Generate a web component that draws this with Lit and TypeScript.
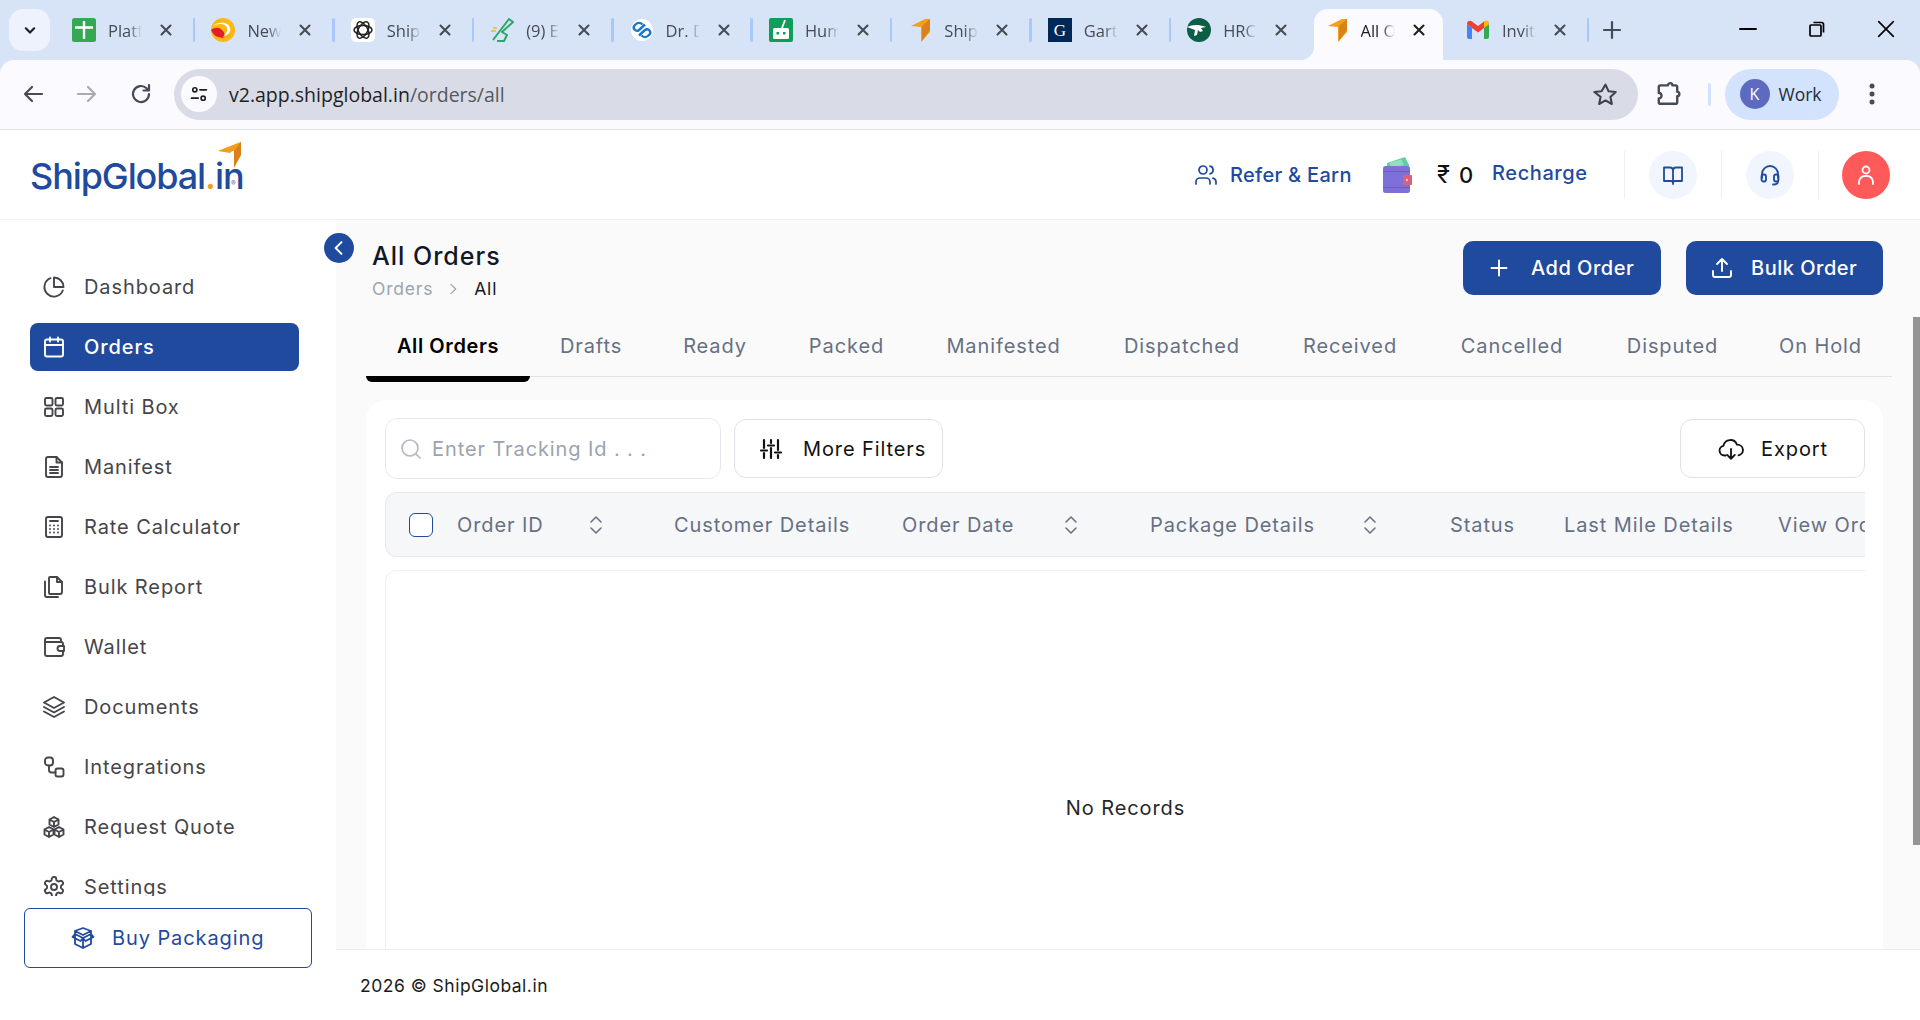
import { LitElement, html, css, svg } from "lit";
import { customElement } from "lit/decorators.js";

const line = (body: unknown, size = 24, sw = 2) => html`<svg width=${size} height=${size} viewBox="0 0 24 24" fill="none" stroke="currentColor" stroke-width=${sw} stroke-linecap="round" stroke-linejoin="round">${body}</svg>`;

const arrowMark = svg`<path d="M3 8 L17 1 L22 1 L22 14 L13 24 L13 9 Z" fill="#f59e1b"/><path d="M22 1 L22 12 L14 23 L14 8 Z" fill="#d9821a"/>`;

const favicons: Record<string, unknown> = {
  plus: html`<svg width="24" height="24" viewBox="0 0 24 24"><rect width="24" height="24" rx="2.5" fill="#34a853"/><path d="M12 3v18M3 9.5h18" stroke="#fff" stroke-width="2.4"/></svg>`,
  swirl: html`<svg width="24" height="24" viewBox="0 0 24 24"><circle cx="12" cy="12" r="12" fill="#fdb913"/><path d="M0 12c4-3 8-3 11 0s3 5 1 7c3 1 7 0 10-6a12 12 0 0 1-22-1z" fill="#e21f26"/><path d="M2 8c4-3 13-3 14 2 1 3-1 5-3 8 5-1 7-5 6-8C18 4 7 3 2 8z" fill="#fff"/></svg>`,
  knot: html`<svg width="24" height="24" viewBox="0 0 24 24"><rect width="24" height="24" rx="5" fill="#fff"/><g fill="none" stroke="#222" stroke-width="1.5"><ellipse cx="12" cy="12" rx="9" ry="4.6"/><ellipse cx="12" cy="12" rx="9" ry="4.6" transform="rotate(60 12 12)"/><ellipse cx="12" cy="12" rx="9" ry="4.6" transform="rotate(120 12 12)"/></g></svg>`,
  zig: html`<svg width="24" height="24" viewBox="0 0 24 24" fill="none"><path d="M3 22 L19 1 L23 4 L12 14 L17 17 L14 23 L7 23" stroke="#2ba866" stroke-width="2" stroke-linejoin="round"/><path d="M1 13h5M3 10h4" stroke="#f4b33a" stroke-width="1.5"/></svg>`,
  rings: html`<svg width="24" height="24" viewBox="0 0 24 24" fill="none"><circle cx="12" cy="12" r="11" fill="#fff"/><path d="M15 6.5 9 12a3.2 3.2 0 0 1-4.5-4.5l1-1a5 5 0 0 1 7 0M9 17.500 15 12a3.200 3.200 0 0 1 4.500 4.500l-1 1a5 5 0 0 1-7 0" stroke="#1877c9" stroke-width="2.400"/></svg>`,
  bot: html`<svg width="24" height="24" viewBox="0 0 24 24"><rect width="24" height="24" rx="2" fill="#0f9d58"/><rect x="4" y="10" width="16" height="11" rx="1.500" fill="#fff"/><path d="M13 10 16 2" stroke="#fff" stroke-width="1.800"/><rect x="7.500" y="14" width="2.500" height="2.500" fill="#0f9d58"/><rect x="14" y="14" width="2.500" height="2.500" fill="#0f9d58"/></svg>`,
  ship: html`<svg width="24" height="24" viewBox="0 0 24 24">${arrowMark}</svg>`,
  gart: html`<svg width="24" height="24" viewBox="0 0 24 24"><rect width="24" height="24" fill="#002856"/><text x="12" y="18" text-anchor="middle" font-family="'Liberation Serif',serif" font-size="17" fill="#fff">G</text></svg>`,
  hrc: html`<svg width="24" height="24" viewBox="0 0 24 24"><circle cx="12" cy="12" r="12" fill="#0c5f46"/><path d="M0 9c5-2 10-3 19 0l-5 1 2 3-3 1-2-2-1 5-3 1 1-6z" fill="#fff"/></svg>`,
  gmail: html`<svg width="24" height="24" viewBox="0 0 24 24" fill="none"><path d="M1 6v13a2 2 0 0 0 2 2h3V10z" fill="#4285f4"/><path d="M23 6v13a2 2 0 0 1-2 2h-3V10z" fill="#34a853"/><path d="M1 6c0-3 3-4 5-2.500L12 8l6-4.500c2-1.500 5-.5 5 2.500l-5 4-6 4.500L6 10z" fill="#ea4335"/><path d="M18 3.500c2-1.500 5-.5 5 2.500l-5 4z" fill="#fbbc04"/></svg>`,
};

const browserTabs = [
  ["plus", "Platform"], ["swirl", "New"], ["knot", "Ship"], ["zig", "(9) E"], ["rings", "Dr. D"],
  ["bot", "Hum"], ["ship", "Ship"], ["gart", "Gart"], ["hrc", "HRC"], ["ship", "All Orders"], ["gmail", "Invite"],
];

const navIcons: Record<string, unknown> = {
  pie: svg`<path d="M20.800 15.500A9.500 9.500 0 1 1 8.500 3.200"/><path d="M21.500 12A9.500 9.500 0 0 0 12 2.500V12z"/>`,
  cal: svg`<rect x="3" y="4.500" width="18" height="17" rx="2"/><path d="M8 2.500v4M16 2.500v4M3 10h18"/>`,
  grid: svg`<rect x="3" y="3" width="7.500" height="7.500" rx="1.500"/><rect x="13.500" y="3" width="7.500" height="7.500" rx="1.500"/><rect x="3" y="13.500" width="7.500" height="7.500" rx="1.500"/><rect x="13.500" y="13.500" width="7.500" height="7.500" rx="1.500"/>`,
  file: svg`<path d="M14.500 2H6a2 2 0 0 0-2 2v16a2 2 0 0 0 2 2h12a2 2 0 0 0 2-2V7.500z"/><path d="M14.500 2v5.500H20M8 12h8M8 15h8M8 18h8"/>`,
  calc: svg`<rect x="4" y="2" width="16" height="20" rx="2"/><path d="M8 6h8M8 10.500h.01M12 10.500h.01M16 10.500h.01M8 14h.01M12 14h.01M16 14h.01M8 17.500h.01M12 17.500h.01M16 17.500h.01"/>`,
  copy: svg`<path d="M8 2h7l5 5v10a2 2 0 0 1-2 2H8a1 1 0 0 1-1-1V3a1 1 0 0 1 1-1z"/><path d="M15 2v5h5M3 6.500V20a2 2 0 0 0 2 2h11"/>`,
  wallet: svg`<path d="M19 7V5a2 2 0 0 0-2-2H5a2 2 0 0 0-2 2v14a2 2 0 0 0 2 2h14a2 2 0 0 0 2-2v-3"/><path d="M3 7h16a2 2 0 0 1 2 2v2"/><path d="M22 11h-4a2.500 2.500 0 0 0 0 5h4z"/>`,
  layers: svg`<path d="M12 2 2 7.500 12 13l10-5.500z"/><path d="M2 12l10 5.500L22 12M2 16.500 12 22l10-5.500"/>`,
  nodes: svg`<rect x="3" y="2.500" width="8" height="8" rx="3"/><rect x="13.500" y="13.500" width="8" height="8" rx="2"/><path d="M7 10.500V15a2.500 2.500 0 0 0 2.500 2.500h4"/>`,
  cubes: svg`<path d="M12 2l4.500 2.500v5L12 12 7.500 9.500v-5zM12 7v5M7.500 4.500 12 7l4.500-2.500"/><path d="M7 12l4.500 2.500v5L7 22l-4.500-2.500v-5zM7 17v5M2.500 14.500 7 17l4.500-2.500"/><path d="M17 12l4.500 2.500v5L17 22l-4.500-2.500v-5zM17 17v5M12.500 14.500 17 17l4.500-2.500"/>`,
  gear: svg`<path d="M12.220 2h-.44a2 2 0 0 0-2 2v.18a2 2 0 0 1-1 1.730l-.43.25a2 2 0 0 1-2 0l-.15-.08a2 2 0 0 0-2.730.73l-.22.38a2 2 0 0 0 .73 2.730l.15.1a2 2 0 0 1 1 1.720v.51a2 2 0 0 1-1 1.740l-.15.09a2 2 0 0 0-.73 2.730l.22.38a2 2 0 0 0 2.730.73l.15-.08a2 2 0 0 1 2 0l.43.25a2 2 0 0 1 1 1.730V20a2 2 0 0 0 2 2h.44a2 2 0 0 0 2-2v-.18a2 2 0 0 1 1-1.730l.43-.25a2 2 0 0 1 2 0l.15.08a2 2 0 0 0 2.730-.73l.22-.39a2 2 0 0 0-.73-2.730l-.15-.08a2 2 0 0 1-1-1.740v-.5a2 2 0 0 1 1-1.740l.15-.09a2 2 0 0 0 .73-2.730l-.22-.38a2 2 0 0 0-2.730-.73l-.15.08a2 2 0 0 1-2 0l-.43-.25a2 2 0 0 1-1-1.730V4a2 2 0 0 0-2-2z"/><circle cx="12" cy="12" r="3"/>`,
};

const navItems = [
  ["pie", "Dashboard"], ["cal", "Orders"], ["grid", "Multi Box"], ["file", "Manifest"], ["calc", "Rate Calculator"],
  ["copy", "Bulk Report"], ["wallet", "Wallet"], ["layers", "Documents"], ["nodes", "Integrations"], ["cubes", "Request Quote"], ["gear", "Settings"],
];

// widths read off the reference, the text is centred in each
const orderTabs: [string, number][] = [
  ["All Orders", 164], ["Drafts", 122], ["Ready", 126], ["Packed", 137], ["Manifested", 177],
  ["Dispatched", 180], ["Received", 156], ["Cancelled", 168], ["Disputed", 153], ["On Hold", 143],
];

const columns: [string, number, number][] = [
  ["Order ID", 217, 70], ["Customer Details", 228, 0], ["Order Date", 248, 71], ["Package Details", 300, 72],
  ["Status", 114, 0], ["Last Mile Details", 214, 0], ["View Order", 120, 0],
];

const sortIcon = html`<svg class="sort" width="16" height="24" viewBox="0 0 16 24" fill="none" stroke="#6b7280" stroke-width="1.600" stroke-linecap="round" stroke-linejoin="round"><path d="M3 9l5-5 5 5M3 15l5 5 5-5"/></svg>`;

@customElement("app-root")
export class AppRoot extends LitElement {
  static styles = css`
    * { box-sizing: border-box; margin: 0; padding: 0; }
    :host { display: block; width: 1920px; height: 1020px; overflow: hidden; background: #fff; font-family: Inter, "Liberation Sans", sans-serif; font-size: 20px; letter-spacing: 0.9px; color: #111; }

    .chrome { background: #d7e3f7; font-family: "Open Sans", "Noto Sans", sans-serif; letter-spacing: 0; }
    .strip { height: 60px; display: flex; align-items: flex-end; }
    .tab-menu { width: 41px; height: 42px; margin: 0 6px 9px 9px; border-radius: 14px; background: #edf2fc; display: flex; align-items: center; justify-content: center; color: #1f1f1f; }
    .tab { width: 139.4px; height: 51px; padding: 0 0 9px 16px; display: flex; align-items: center; position: relative; color: #474b55; }
    .tab::after { content: ""; position: absolute; right: 0; top: 9px; width: 2.500px; height: 24px; background: #a8c7fa; border-radius: 2px; }
    .tab.before-active::after, .tab.active::after { display: none; }
    .tab .title { width: 34px; margin-left: 12px; font-size: 16.500px; white-space: nowrap; overflow: hidden; -webkit-mask-image: linear-gradient(90deg, #000 60%, transparent); mask-image: linear-gradient(90deg, #000 60%, transparent); }
    .tab .fav { width: 24px; height: 24px; flex: none; display: flex; }
    .tab .x { margin-left: 15px; display: flex; color: #474b55; }
    .tab.active { background: #fafaff; border-radius: 14px 14px 0 0; color: #1f1f1f; margin-left: 3px; width: 129px; padding-left: 11px; margin-right: 7.400px; }
    .tab.active .x { color: #1f1f1f; margin-left: 15px; }
    .tab.active::before { content: ""; position: absolute; left: -14px; bottom: 0; width: 14px; height: 14px; background: radial-gradient(circle at 0 0, transparent 14px, #fafaff 14.500px); }
    .new-tab { width: 46px; height: 42px; margin-bottom: 9px; display: flex; align-items: center; justify-content: center; color: #474b55; }
    .win { margin-left: auto; display: flex; align-self: flex-start; height: 60px; }
    .win span { width: 69px; height: 58px; display: flex; align-items: center; justify-content: center; color: #000; }

    .toolbar { height: 70px; background: #fafaff; border-radius: 14px 14px 0 0; border-bottom: 1px solid #e3e3e6; display: flex; align-items: center; padding: 0 0 1px 9px; color: #474b55; }
    .tool { width: 48px; height: 48px; margin-right: 6px; display: flex; align-items: center; justify-content: center; flex: none; }
    .tool.off { color: #a9abb0; }
    .omni { width: 1464px; height: 51px; margin-left: 3px; border-radius: 26px; background: #d9dce6; display: flex; align-items: center; padding: 0 20px 0 7px; }
    .site { width: 36px; height: 36px; border-radius: 50%; background: #fafaff; display: flex; align-items: center; justify-content: center; color: #1f1f1f; }
    .url { margin-left: 12px; font-size: 19.500px; color: #55585f; flex: 1; }
    .url b { font-weight: 400; color: #1f1f1f; }
    .star { display: flex; color: #3f4249; }
    .puzzle { margin-left: 17px; margin-right: 14px; display: flex; color: #474b55; }
    .tool-sep { width: 2.500px; height: 23px; background: #d3e3fd; border-radius: 2px; margin-left: 13px; }
    .profile { width: 114px; height: 51px; margin-left: 14px; border-radius: 26px; background: #d3e3fd; display: flex; align-items: center; padding-left: 15px; color: #1f2a44; font-size: 17.500px; flex: none; }
    .avatar { width: 30px; height: 30px; border-radius: 50%; background: #5c6bc0; color: #fff; display: flex; align-items: center; justify-content: center; font-size: 16px; margin-right: 9px; }
    .dots { width: 66px; display: flex; justify-content: center; color: #474b55; }

    .site-header { height: 90px; background: #fff; border-bottom: 1px solid #f0f0f2; display: flex; align-items: center; padding: 0 30px; }
    .logo { position: relative; width: 212px; font-size: 36px; line-height: 40px; font-weight: 500; letter-spacing: -1.100px; color: #1f4a9e; white-space: nowrap; margin-top: 2px; }
    .logo i { font-style: normal; color: #f59e1b; }
    .logo .mark { position: absolute; left: 188px; top: -14px; width: 24px; height: 32px; }
    .logo sup { position: absolute; left: 201px; top: 24px; font-size: 7px; letter-spacing: 0; line-height: 8px; color: #5b78b5; }
    .head-right { margin-left: auto; display: flex; align-items: center; }
    .refer { display: flex; align-items: center; gap: 12px; color: #1f4a9e; font-weight: 500; font-size: 20px; letter-spacing: .3px; width: 188px; }
    .money { margin-left: 0; display: flex; align-items: center; width: 110px; }
    .money .rs { margin-left: 25px; font-size: 24px; letter-spacing: 0; }
    .money .zero { margin-left: 9px; font-size: 22px; letter-spacing: 0; font-weight: 500; }
    .recharge { color: #1f4a9e; font-weight: 500; font-size: 20px; letter-spacing: .6px; width: 132px; margin-bottom: 4px; }
    .ico-cell { width: 97px; height: 48px; border-left: 1px solid #eef0f4; display: flex; justify-content: center; padding-left: 0; }
    .ico-cell .circle { width: 48px; height: 48px; border-radius: 50%; background: #f1f5fd; color: #1f4a9e; display: flex; align-items: center; justify-content: center; }
    .ico-cell .circle.red { background: #ff5a5a; color: #fff; }
    .ico-cell.last { width: 72px; justify-content: flex-end; border-left: 1px solid #eef0f4; }

    .body { height: 800px; display: flex; position: relative; }
    .sidebar { width: 336px; flex: none; background: #fff; display: flex; flex-direction: column; }
    .nav { height: 676px; overflow-y: scroll; padding: 43px 0 12px 30px; display: flex; flex-direction: column; gap: 12px; }
    .nav::-webkit-scrollbar { width: 7px; }
    .nav::-webkit-scrollbar-track { background: #f1f1f1; }
    .nav::-webkit-scrollbar-thumb { background: #949494; border-radius: 0 0 4px 4px; }
    .nav-item { width: 269px; height: 48px; flex: none; border-radius: 8px; display: flex; align-items: center; padding-left: 12px; gap: 18px; color: #45454a; }
    .nav-item.on { background: #1f4a9e; color: #fff; font-weight: 500; }
    .buy { width: 288px; height: 60px; margin: 12px 0 0 24px; border: 1px solid #1f4a9e; border-radius: 6px; background: #fff; color: #1f4a9e; display: flex; align-items: center; padding-left: 46px; gap: 17px; font-size: 20px; }
    .collapse { position: absolute; left: 324px; top: 13px; width: 30px; height: 30px; border-radius: 50%; background: #1f4a9e; color: #fff; display: flex; align-items: center; justify-content: center; }

    .main { flex: 1; min-width: 0; display: flex; flex-direction: column; }
    .workspace { height: 729px; display: flex; background: #fafafa; }
    .content { width: 1577px; padding-left: 30px; padding-right: 30px; display: flex; flex-direction: column; overflow: hidden; }
    .page-bar { width: 7px; flex: none; padding-top: 97px; }
    .page-bar div { height: 528px; background: #949494; }
    .page-head { height: 96px; flex: none; padding-top: 21px; display: flex; justify-content: space-between; }
    .titles { padding-left: 6px; }
    .titles h1 { font-size: 25px; line-height: 30px; font-weight: 500; letter-spacing: 1px; color: #111827; }
    .crumbs { margin-top: 6px; display: flex; align-items: center; font-size: 17.500px; line-height: 24px; letter-spacing: .8px; color: #9ca3af; gap: 12px; }
    .crumbs b { font-weight: 400; color: #111827; margin-left: 1px; }
    .actions { display: flex; gap: 25px; }
    .btn { height: 54px; border-radius: 10px; background: #1f4a9e; color: #fff; display: flex; align-items: center; font-weight: 500; letter-spacing: .5px; }
    .btn.add { width: 198px; padding-left: 24px; gap: 20px; }
    .btn.bulk { width: 197px; padding-left: 24px; gap: 17px; }
    .tabs { width: 1526px; height: 61px; flex: none; display: flex; border-bottom: 1px solid #e2e2e2; }
    .otab { height: 60px; display: flex; align-items: center; justify-content: center; color: #667085; position: relative; flex: none; }
    .otab.on { color: #000; font-weight: 600; letter-spacing: .6px; }
    .otab.on::after { content: ""; position: absolute; left: 0; right: 0; top: 60px; height: 6px; background: #000; border-radius: 0 0 6px 6px; }

    .card { margin-top: 23px; flex: 1; min-height: 0; background: #fff; border-radius: 20px 20px 0 0; padding: 18px 18px 0 19px; display: flex; flex-direction: column; overflow: hidden; }
    .filters { height: 61px; flex: none; display: flex; align-items: center; }
    .search { width: 336px; height: 61px; border: 1px solid #e7e8ec; border-radius: 12px; display: flex; align-items: center; padding-left: 13px; gap: 9px; color: #b4b9c6; }
    .search span { color: #9ca3af; }
    .out { height: 59px; border: 1px solid #e0e1e6; border-radius: 12px; background: #fff; color: #111; display: flex; align-items: center; }
    .out.more { width: 209px; margin-left: 13px; padding-left: 24px; gap: 20px; }
    .out.exp { width: 185px; margin-left: auto; padding-left: 37px; gap: 17px; }
    .thead { height: 65px; flex: none; margin-top: 13px; background: #f6f7f9; border: 1px solid #e7e8ec; border-right: 0; border-radius: 12px 0 0 12px; display: flex; align-items: center; padding-left: 23px; overflow: hidden; white-space: nowrap; color: #667085; }
    .check { width: 24px; height: 24px; border: 1.500px solid #1f4a9e; border-radius: 6px; background: #fff; flex: none; margin-right: 24px; }
    .th { display: flex; align-items: center; justify-content: space-between; flex: none; }
    .rows { flex: 1; margin-top: 13px; border: 1px solid #eef0f5; border-right: 0; border-bottom: 0; border-radius: 12px 0 0 0; display: flex; justify-content: center; padding-top: 225px; color: #27272a; }
    .foot { height: 71px; background: #fff; border-top: 1px solid #eeeef0; padding: 24px 0 0 24px; font-size: 17.500px; line-height: 24px; letter-spacing: .5px; color: #1a1a1a; }
  `;

  render() {
    return html`
      <div class="chrome">
        <div class="strip">
          <div class="tab-menu">${line(svg`<path d="M7 10l5 5 5-5"/>`, 20, 2.6)}</div>
          ${browserTabs.map(([f, t], i) => html`
            <div class="tab ${i === 9 ? "active" : ""} ${i === 8 ? "before-active" : ""}">
              <span class="fav">${favicons[f]}</span>
              <span class="title">${t}</span>
              <span class="x">${line(svg`<path d="M6 6l12 12M18 6 6 18"/>`, 18, 2.8)}</span>
            </div>`)}
          <div class="new-tab">${line(svg`<path d="M12 4v16M4 12h16"/>`, 24, 2.2)}</div>
          <div class="win">
            <span>${line(svg`<path d="M4 12h16"/>`, 24, 1.8)}</span>
            <span><svg width="16" height="16" viewBox="0 0 16 16" fill="none" stroke="#000" stroke-width="1.700"><rect x="1" y="4" width="11" height="11" rx="1"/><path d="M4.500 1.500h8a2 2 0 0 1 2 2v8"/></svg></span>
            <span>${line(svg`<path d="M4 4l16 16M20 4 4 20"/>`, 22, 1.800)}</span>
          </div>
        </div>
        <div class="toolbar">
          <div class="tool">${line(svg`<path d="M21 12H4M11 5l-7 7 7 7"/>`, 24, 2.200)}</div>
          <div class="tool off">${line(svg`<path d="M3 12h17M13 5l7 7-7 7"/>`, 24, 2.200)}</div>
          <div class="tool">${line(svg`<path d="M20 12a8 8 0 1 1-2.500-5.800L20 8.500M20 3v5.500h-5.500"/>`, 24, 2.200)}</div>
          <div class="omni">
            <div class="site">${line(svg`<circle cx="7" cy="7" r="2.500"/><path d="M13 7h8M3 17h8"/><circle cx="17" cy="17" r="2.500"/>`, 20, 2)}</div>
            <div class="url"><b>v2.app.shipglobal.in</b>/orders/all</div>
            <div class="star">${line(svg`<path d="M12 2.500l2.900 6.300 6.900.8-5.100 4.700 1.400 6.800-6.100-3.400-6.100 3.400 1.400-6.800L1.300 9.600l6.900-.8z"/>`, 25, 2)}</div>
          </div>
          <div class="puzzle">${line(svg`<path d="M9 4h3a2 2 0 0 1 4 0h3a1.500 1.500 0 0 1 1.500 1.500V10a2 2 0 0 1 0 4v5.500A1.500 1.500 0 0 1 19 21H5a1.500 1.500 0 0 1-1.500-1.500V16a2.500 2.500 0 0 0 0-5V5.500A1.500 1.500 0 0 1 5 4z"/>`, 26, 2.200)}</div>
          <div class="tool-sep"></div>
          <div class="profile"><span class="avatar">K</span>Work</div>
          <div class="dots"><svg width="6" height="22" viewBox="0 0 6 22" fill="currentColor"><circle cx="3" cy="3" r="2.500"/><circle cx="3" cy="11" r="2.500"/><circle cx="3" cy="19" r="2.500"/></svg></div>
        </div>
      </div>

      <header class="site-header">
        <div class="logo">ShipGlobal<i>.</i>in
          <svg class="mark" viewBox="0 0 24 32"><path d="M0 9 L23 0 L23 1 L12 11 Z" fill="#f59e1b" transform="translate(0 0)"/><path d="M0 9 L16 9 L16 25 L23 12 L23 0 Z" fill="#f59e1b"/><path d="M16 9 L23 0 L23 13 L16 26 Z" fill="#d9821a"/></svg>
          <sup>®</sup>
        </div>
        <div class="head-right">
          <div class="refer">${line(svg`<path d="M16 21v-2a4 4 0 0 0-4-4H6a4 4 0 0 0-4 4v2"/><circle cx="9" cy="7" r="4"/><path d="M22 21v-2a4 4 0 0 0-3-3.900M16 3.100a4 4 0 0 1 0 7.800"/>`, 24, 1.700)}<span>Refer &amp; Earn</span></div>
          <div class="money">
            <svg width="30" height="36" viewBox="0 0 30 36"><path d="M5 6 L23 0 L27 8 L27 12 L5 12 Z" fill="#5fcf9f"/><rect x="8" y="4" width="13" height="6" fill="#8fe0bd" transform="rotate(-16 14 7)"/><rect x="1" y="9" width="27" height="27" rx="2.500" fill="#7f6fd8"/><rect x="1" y="14" width="27" height="1" fill="#6a5bc2"/><rect x="1" y="30" width="27" height="1" fill="#6a5bc2"/><rect x="21" y="18" width="9" height="10" rx="1" fill="#d9607a"/><circle cx="25" cy="23" r="1.200" fill="#f3c4cf"/></svg>
            <span class="rs">₹</span><span class="zero">0</span>
          </div>
          <div class="recharge">Recharge</div>
          <div class="ico-cell"><span class="circle">${line(svg`<path d="M12 6.500v14.500M3 4.500h6a3 3 0 0 1 3 3 3 3 0 0 1 3-3h6v13.500h-7a2 2 0 0 0-2 2 2 2 0 0 0-2-2H3z"/>`, 24, 1.800)}</span></div>
          <div class="ico-cell"><span class="circle">${line(svg`<path d="M4 15v-4a8 8 0 0 1 16 0v4"/><rect x="3.500" y="11.500" width="4.500" height="7" rx="2"/><rect x="16" y="11.500" width="4.500" height="7" rx="2"/><path d="M20 18.500c0 2-2 3-5 3"/>`, 24, 1.800)}</span></div>
          <div class="ico-cell last"><span class="circle red">${line(svg`<circle cx="12" cy="7" r="3.500"/><path d="M5 21v-2a6 6 0 0 1 6-6h2a6 6 0 0 1 6 6v2"/>`, 24, 1.800)}</span></div>
        </div>
      </header>

      <div class="body">
        <aside class="sidebar">
          <nav class="nav">
            ${navItems.map(([ic, label]) => html`<div class="nav-item ${label === "Orders" ? "on" : ""}">${line(navIcons[ic], 24, 1.900)}<span>${label}</span></div>`)}
          </nav>
          <div class="buy">${line(svg`<path d="M12 9 4 5l8-3 8 3zM4 5v3l8 4 8-4V5M4 8v10l8 4 8-4V8M12 12v10M4 8 1.500 11l8 4L12 12l2.500 3 8-4L20 8"/>`, 24, 1.800)}<span>Buy Packaging</span></div>
        </aside>
        <div class="collapse">${line(svg`<path d="M15 5l-7 7 7 7"/>`, 20, 2.400)}</div>

        <div class="main">
          <div class="workspace">
            <section class="content">
              <div class="page-head">
                <div class="titles">
                  <h1>All Orders</h1>
                  <div class="crumbs"><span>Orders</span>${line(svg`<path d="M9 5l7 7-7 7"/>`, 16, 1.800)}<b>All</b></div>
                </div>
                <div class="actions">
                  <div class="btn add">${line(svg`<path d="M12 4.500v15M4.500 12h15"/>`, 24, 1.900)}<span>Add Order</span></div>
                  <div class="btn bulk">${line(svg`<path d="M21 15v4a2 2 0 0 1-2 2H5a2 2 0 0 1-2-2v-4M17 8l-5-5-5 5M12 3v12"/>`, 24, 1.900)}<span>Bulk Order</span></div>
                </div>
              </div>
              <div class="tabs">
                ${orderTabs.map(([t, w], i) => html`<div class="otab ${i === 0 ? "on" : ""}" style="width:${w}px">${t}</div>`)}
              </div>
              <div class="card">
                <div class="filters">
                  <div class="search">${line(svg`<circle cx="11" cy="11" r="8"/><path d="M21 21l-4.300-4.300"/>`, 24, 1.700)}<span>Enter Tracking Id . . .</span></div>
                  <div class="out more">${line(svg`<path d="M5 3v8M5 16v5M12 3v3M12 11v10M19 3v10M19 18v3M2 13.500h6M9 8.500h6M16 15.500h6"/>`, 24, 2.200)}<span>More Filters</span></div>
                  <div class="out exp">${line(svg`<path d="M7 18H6a4.500 4.500 0 0 1-1-8.900A6.500 6.500 0 0 1 17.500 8h.5a5 5 0 0 1 1 9.900M12 12v9M8.500 17.500 12 21l3.500-3.500"/>`, 26, 1.700)}<span>Export</span></div>
                </div>
                <div class="thead">
                  <div class="check"></div>
                  ${columns.map(([t, w, pad]) => html`<div class="th" style="width:${w}px;padding-right:${pad}px"><span>${t}</span>${pad ? sortIcon : ""}</div>`)}
                </div>
                <div class="rows">No Records</div>
              </div>
            </section>
            <div class="page-bar"><div></div></div>
          </div>
          <footer class="foot">2026 © ShipGlobal.in</footer>
        </div>
      </div>
    `;
  }
}
